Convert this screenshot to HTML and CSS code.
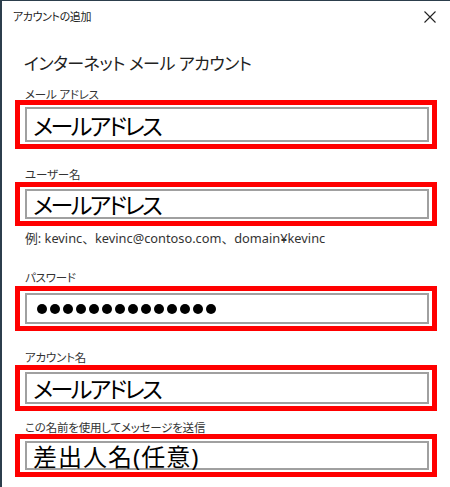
FILE: index.html
```html
<!DOCTYPE html>
<html lang="ja">
<head>
<meta charset="utf-8">
<link rel="stylesheet" href="styles.css">
</head>
<body>
<div class="dialog">
  <div class="titlebar">
    <span class="title">アカウントの追加</span>
    <svg class="close" width="12" height="12" viewBox="0 0 12 12"><path d="M0.5 0.5 L11.5 11.5 M11.5 0.5 L0.5 11.5" stroke="#222" stroke-width="1.1" fill="none"/></svg>
  </div>
  <h1 class="heading">インターネット メール アカウント</h1>

  <div class="field f1">
    <div class="label">メール アドレス</div>
    <div class="frame">
      <div class="input kana h35">メールアドレス</div>
    </div>
  </div>

  <div class="field f2">
    <div class="label">ユーザー名</div>
    <div class="frame">
      <div class="input kana h30">メールアドレス</div>
    </div>
    <div class="hint">例: kevinc、kevinc@contoso.com、domain¥kevinc</div>
  </div>

  <div class="field f3">
    <div class="label">パスワード</div>
    <div class="frame">
      <div class="input h31 dots">
        <span class="dot"></span><span class="dot"></span><span class="dot"></span><span class="dot"></span><span class="dot"></span><span class="dot"></span><span class="dot"></span><span class="dot"></span><span class="dot"></span><span class="dot"></span><span class="dot"></span><span class="dot"></span><span class="dot"></span><span class="dot"></span>
      </div>
    </div>
  </div>

  <div class="field f4">
    <div class="label">アカウント名</div>
    <div class="frame">
      <div class="input kana h32">メールアドレス</div>
    </div>
  </div>

  <div class="field f5">
    <div class="label">この名前を使用してメッセージを送信</div>
    <div class="frame">
      <div class="input kanji h29">差出人名(任意)</div>
    </div>
  </div>
</div>
</body>
</html>
```

FILE: styles.css
```css
html, body {
  margin: 0;
  padding: 0;
  background: #fff;
}
body {
  width: 450px;
  height: 487px;
  overflow: hidden;
  font-family: "Noto Sans", "Noto Sans CJK JP", sans-serif;
  font-feature-settings: "palt";
  color: #222;
}
.dialog {
  box-sizing: border-box;
  width: 450px;
  height: 487px;
  border-left: 2px solid #2c3e4c;
  border-top: 1px solid #2c3e4c;
}
.titlebar {
  height: 30px;
  display: flex;
  align-items: center;
  justify-content: space-between;
  padding: 0 14px 0 11px;
}
.title {
  font-size: 11px;
  letter-spacing: -0.4px;
  color: #222;
}
.close {
  display: block;
  margin-top: 1px;
}
.heading {
  margin: 21px 0 0 22px;
  font-size: 17px;
  line-height: 24px;
  letter-spacing: -0.5px;
  font-weight: 400;
  color: #222;
}
.field {
  margin-left: 13px;
}
.label {
  margin-left: 10px;
  font-size: 11.5px;
  line-height: 14px;
  letter-spacing: -0.2px;
  color: #333;
}
.frame {
  position: relative;
  width: 422px;
  box-sizing: border-box;
  border: 5px solid #ff0000;
  padding: 2px 3px 2px 5px;
  background: #fff;
}
.input {
  box-sizing: border-box;
  border: 2px solid #a0a0a0;
  display: flex;
  align-items: center;
  padding-left: 6px;
  font-size: 24px;
  color: #000;
  white-space: nowrap;
}
.kana {
  font-size: 23px;
  letter-spacing: -2.5px;
}
.kanji {
  letter-spacing: 1px;
}
.h35 { height: 35px; }
.h30 { height: 30px; }
.h31 { height: 31px; }
.h32 { height: 32px; }
.h29 { height: 29px; }

.f1 { margin-top: 12px; }
.f1 .frame { margin-top: -2px; }
.f2 { margin-top: 19px; }
.f3 { margin-top: 25px; }
.f3 .frame { margin-top: 1px; }
.f4 { margin-top: 20px; }
.f5 { margin-top: 10px; }
.f5 .frame { margin-top: -1px; }

.hint {
  margin: 4px 0 0 10px;
  font-size: 12.8px;
  line-height: 16px;
  font-feature-settings: normal;
  color: #333;
}
.dots {
  padding-left: 10px;
  gap: 3px;
}
.dot {
  width: 10px;
  height: 10px;
  border-radius: 50%;
  background: #000;
  flex: none;
}
```
